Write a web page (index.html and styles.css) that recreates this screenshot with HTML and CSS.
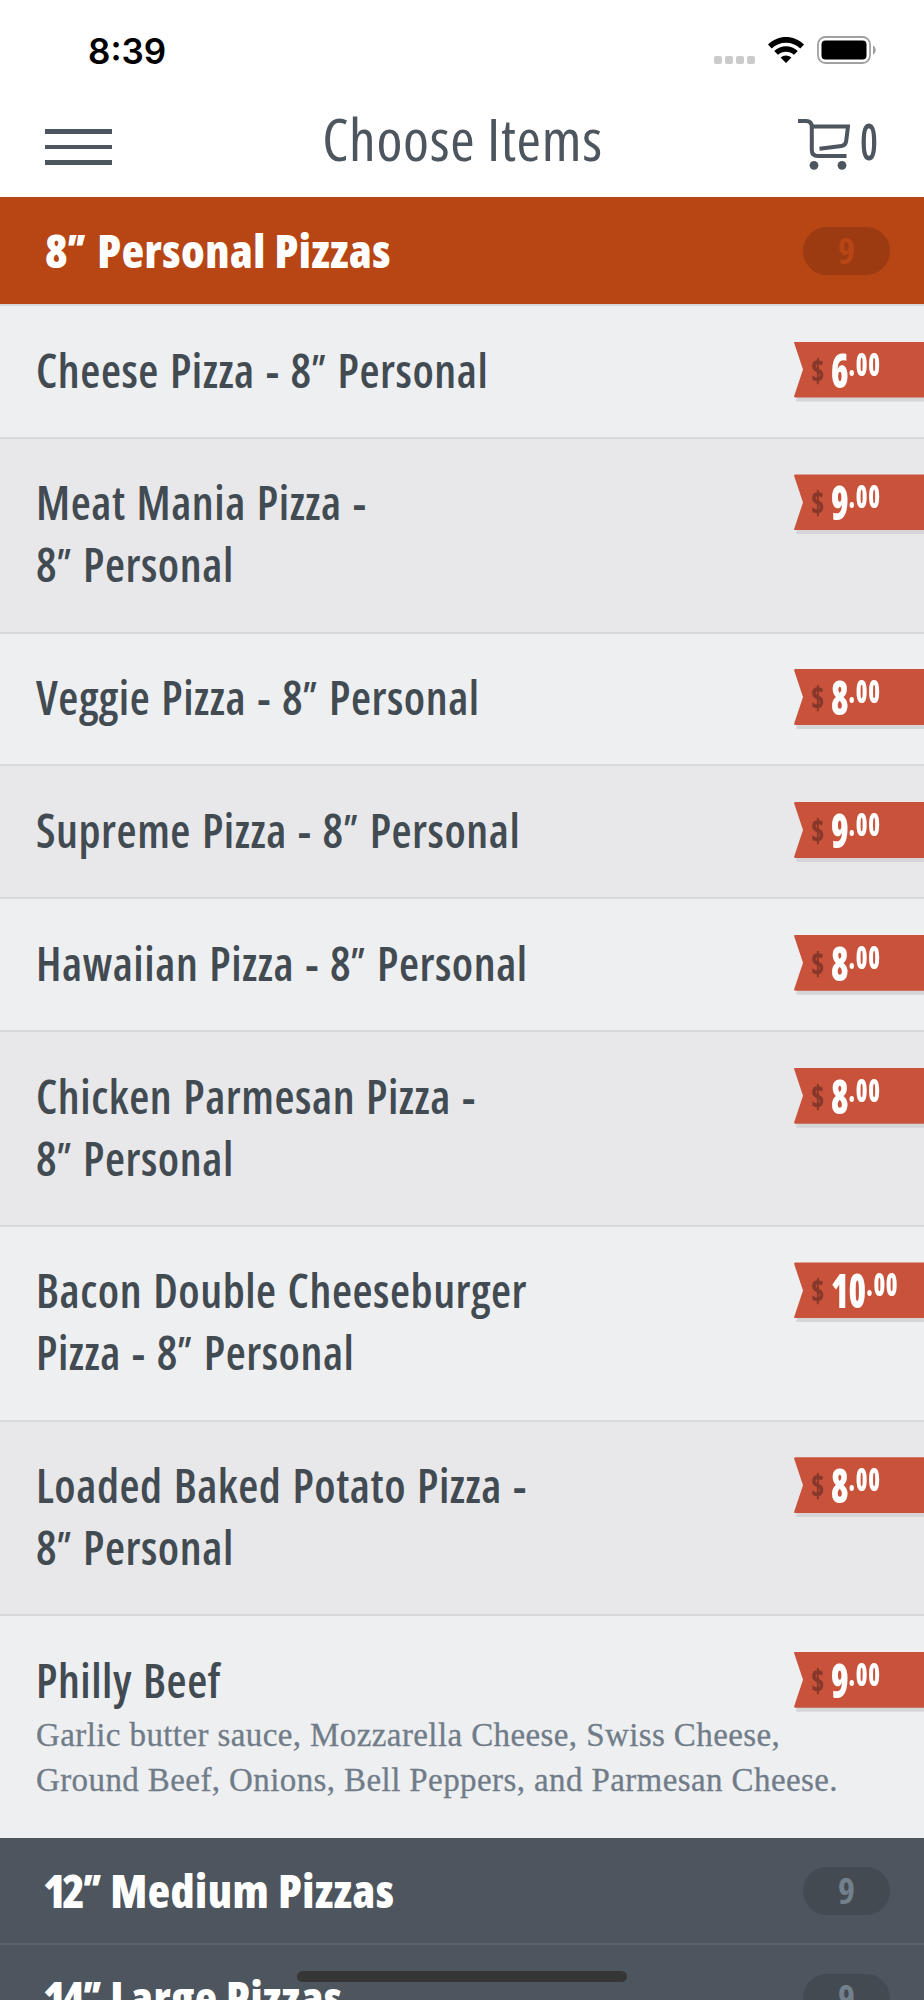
FILE: index.html
```
<!DOCTYPE html>
<html lang="en">
  <head>
    <meta charset="utf-8" />
    <title>Choose Items</title>
    <meta name="viewport" content="width=device-width, initial-scale=1.0" />
    <link rel="stylesheet" href="styles.css">
  </head>
  <body>
    <div class="screen">
      <div class="status-bar">
        <span class="time">8:39</span>
        <div class="status-icons">
          <svg class="signal" width="41" height="8" viewBox="0 0 41 8" fill="#cbcbcb">
            <rect x="0" width="8" height="8" rx="2" />
            <rect x="11" width="8" height="8" rx="2" />
            <rect x="22" width="8" height="8" rx="2" />
            <rect x="33" width="8" height="8" rx="2" />
          </svg>
          <svg class="wifi" width="36" height="26" viewBox="0 0 36 26">
            <path d="M0 7.5C10-2.5 26-2.5 36 7.5L32.3 11.4C24.3 3.7 11.7 3.7 3.7 11.4Z" />
            <path d="M6.2 14C12.8 7.6 23.2 7.6 29.8 14L26 17.8C21.5 13.6 14.5 13.6 10 17.8Z" />
            <path d="M12.6 20.5C15.7 17.8 20.3 17.8 23.4 20.5L18 26Z" />
          </svg>
          <svg class="battery" width="60" height="28" viewBox="0 0 60 28">
            <rect x="1" y="1" width="52" height="26" rx="7.5" fill="none" stroke="#a0a0a0" stroke-width="1.8" />
            <rect x="4.5" y="4.5" width="45" height="19" rx="4" />
            <path d="M56 9.5C59.6 11 59.6 17 56 18.5Z" fill="#a0a0a0" />
          </svg>
        </div>
      </div>

      <div class="nav">
        <div class="menu"><i></i><i></i><i></i></div>
        <h1>Choose Items</h1>
        <div class="cart">
          <svg width="52" height="53" viewBox="0 0 52 53" fill="none" stroke="#4d555e" stroke-width="4">
            <path d="M0 2H8Q13.8 2 13.8 8V31Q13.8 37 20 37H48.5" />
            <path d="M14 7.5H50L48.2 22Q47.6 26.5 43.5 27L21.5 29.7" />
            <circle cx="16" cy="46.3" r="4.4" fill="#4d555e" stroke="none" />
            <circle cx="44" cy="46.3" r="4.4" fill="#4d555e" stroke="none" />
          </svg>
          <span>0</span>
        </div>
      </div>

      <div class="category open">
        <h2>8<em>"</em> Personal Pizzas</h2>
        <span class="count">9</span>
      </div>

      <ul class="items">
        <li>
          <h3>Cheese Pizza - 8<em>"</em> Personal</h3>
          <div class="price"><span class="currency">$</span><span class="amount">6<sup>.00</sup></span></div>
        </li>
        <li>
          <h3>Meat Mania Pizza -<br>8<em>"</em> Personal</h3>
          <div class="price"><span class="currency">$</span><span class="amount">9<sup>.00</sup></span></div>
        </li>
        <li>
          <h3>Veggie Pizza - 8<em>"</em> Personal</h3>
          <div class="price"><span class="currency">$</span><span class="amount">8<sup>.00</sup></span></div>
        </li>
        <li>
          <h3>Supreme Pizza - 8<em>"</em> Personal</h3>
          <div class="price"><span class="currency">$</span><span class="amount">9<sup>.00</sup></span></div>
        </li>
        <li>
          <h3>Hawaiian Pizza - 8<em>"</em> Personal</h3>
          <div class="price"><span class="currency">$</span><span class="amount">8<sup>.00</sup></span></div>
        </li>
        <li>
          <h3>Chicken Parmesan Pizza -<br>8<em>"</em> Personal</h3>
          <div class="price"><span class="currency">$</span><span class="amount">8<sup>.00</sup></span></div>
        </li>
        <li>
          <h3>Bacon Double Cheeseburger<br>Pizza - 8<em>"</em> Personal</h3>
          <div class="price"><span class="currency">$</span><span class="amount">10<sup>.00</sup></span></div>
        </li>
        <li>
          <h3>Loaded Baked Potato Pizza -<br>8<em>"</em> Personal</h3>
          <div class="price"><span class="currency">$</span><span class="amount">8<sup>.00</sup></span></div>
        </li>
        <li>
          <div class="details">
            <h3>Philly Beef</h3>
            <p>Garlic butter sauce, Mozzarella Cheese, Swiss Cheese,<br>Ground Beef, Onions, Bell Peppers, and Parmesan Cheese.</p>
          </div>
          <div class="price"><span class="currency">$</span><span class="amount">9<sup>.00</sup></span></div>
        </li>
      </ul>

      <div class="category">
        <h2><span class="size">12</span><em>"</em> Medium Pizzas</h2>
        <span class="count">9</span>
      </div>
      <div class="category">
        <h2><span class="size">14</span><em>"</em> Large Pizzas</h2>
        <span class="count">9</span>
      </div>

      <div class="home-indicator"></div>
    </div>
  </body>
</html>
```

FILE: styles.css
```
* {
  box-sizing: border-box;
}
body {
  margin: 0;
  background: white;
  font-family: "Open Sans", "Noto Sans", sans-serif;
  font-stretch: 75%;
  color: #424b52;
}
h1,
h2,
h3,
p,
ul {
  margin: 0;
  padding: 0;
}
.screen {
  position: relative;
  width: 924px;
  height: 2000px;
  overflow: hidden;
}
.status-bar {
  display: flex;
  justify-content: space-between;
  height: 100px;
  padding: 30px 47px 0 88px;
}
.time {
  font-family: Inter, sans-serif;
  font-stretch: 100%;
  font-size: 35px;
  font-weight: 600;
  line-height: 42px;
  color: black;
}
.status-icons {
  display: flex;
  align-items: flex-start;
}
.signal {
  margin-top: 26px;
  margin-right: 13px;
}
.wifi {
  margin-top: 7px;
  margin-right: 13px;
}
.battery {
  margin-top: 6px;
}
.nav {
  display: grid;
  grid-template-columns: 1fr auto 1fr;
  height: 97px;
  padding: 0 44px 0 45px;
}
.menu {
  display: flex;
  flex-direction: column;
  gap: 11px;
  padding-top: 29px;
}
.menu i {
  width: 67px;
  height: 4.7px;
  background: #4d555e;
}
.nav h1 {
  font-size: 59px;
  font-weight: 400;
  line-height: 77px;
  letter-spacing: 0.7px;
  color: #4d555e;
}
.cart {
  display: flex;
  justify-content: flex-end;
  gap: 10px;
  padding-top: 19px;
}
.cart span {
  width: 20px;
  font-size: 50px;
  font-weight: 650;
  line-height: 44px;
  color: #4d555e;
  transform: scaleX(0.8);
  transform-origin: left;
}
.category {
  display: flex;
  justify-content: space-between;
  align-items: center;
  height: 107px;
  padding: 0 34px 0 45px;
  background: #4d555e;
  border-bottom: 2px solid #59616b;
}
.category.open {
  background: #b84614;
  border-bottom: none;
}
.category h2 {
  font-size: 46px;
  font-weight: 800;
  line-height: 60px;
  letter-spacing: 0.5px;
  margin-top: -2px;
  color: white;
}
.size {
  letter-spacing: -3.5px;
  margin-left: -2px;
}
/* inch mark */
em {
  display: inline-block;
  width: 17px;
  margin-left: -3.5px;
  margin-right: 7px;
  font-size: 40px;
  line-height: 1;
  vertical-align: 4px;
}
.size + em {
  margin-left: -1px;
  margin-right: 4px;
}
.count {
  width: 87px;
  height: 48px;
  border-radius: 24px;
  background: #434a52;
  font-size: 36px;
  font-weight: 700;
  line-height: 48px;
  text-align: center;
  color: #73808c;
}
.open .count {
  background: #9c3b12;
  color: #b84614;
}
.items {
  list-style: none;
}
.items li {
  display: flex;
  justify-content: space-between;
  align-items: flex-start;
  padding: 35.5px 0 33.6px 36px;
  background: #eeeff1;
  border-top: 2px solid #d7d8da;
}
.items li:nth-child(even) {
  background: #e8e8ea;
}
.items li:last-child {
  padding-bottom: 34.5px;
}
.items h3 {
  font-size: 46px;
  font-weight: 640;
  line-height: 61.8px;
  letter-spacing: 0.55px;
  word-spacing: 2px;
  position: relative;
  top: -2px;
}
.items em {
  width: 15px;
  margin-left: -3px;
  margin-right: 3px;
}
.details {
  width: 0;
}
.details h3 {
  white-space: nowrap;
}
.items p {
  font-family: "Liberation Serif", serif;
  font-stretch: 100%;
  font-size: 33px;
  line-height: 45px;
  letter-spacing: 0.4px;
  margin-top: -1px;
  margin-bottom: 1px;
  color: #717c89;
  white-space: nowrap;
  -webkit-text-stroke: 0.3px #717c89;
}
.price {
  position: relative;
  display: flex;
  flex: none;
  width: 130px;
  height: 56px;
  padding-left: 17px;
  filter: drop-shadow(2px 4px 0 #d5d5d8);
  color: white;
}
.price::before {
  content: "";
  position: absolute;
  inset: 0;
  z-index: -1;
  background: #c9523a;
  clip-path: polygon(0 1px, 1px 0, 100% 0, 100% 100%, 1px 100%, 0 55px, 9px 28px);
}
.currency {
  width: 20px;
  font-size: 32px;
  font-weight: 800;
  line-height: 56px;
  color: #88382a;
  transform: scaleX(0.85);
  transform-origin: left;
}
.amount {
  font-size: 48px;
  font-weight: 800;
  line-height: 55px;
  white-space: nowrap;
  transform: scaleX(0.74);
  transform-origin: left;
}
.amount sup {
  font-size: 32px;
  line-height: 0;
  vertical-align: 12px;
  letter-spacing: 1px;
}
.home-indicator {
  position: absolute;
  left: 297px;
  top: 1971px;
  width: 330px;
  height: 11px;
  border-radius: 6px;
  background: #363636;
}
```
